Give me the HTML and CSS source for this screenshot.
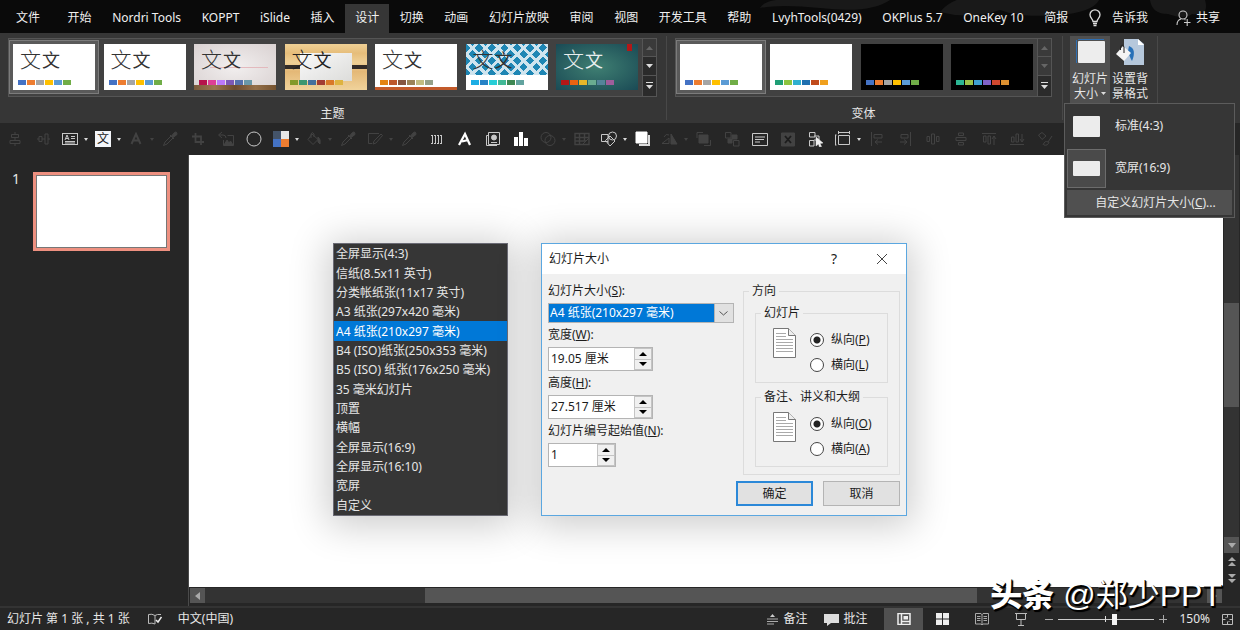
FILE: index.html
```html
<!DOCTYPE html>
<html lang="zh-CN">
<head>
<meta charset="utf-8">
<meta name="viewport" content="width=device-width, initial-scale=1">
<title>幻灯片大小</title>
<link rel="stylesheet" href="styles.css">
</head>
<body>
<div class="app">

  <header class="tabbar">
    <svg class="tabbar-art" viewBox="0 0 480 33" aria-hidden="true">
      <path d="M0 8Q6-2 30 0H130Q110 14 60 8Q20 4 0 8Z"/>
      <path d="M180 12Q190 0 205-2H340Q335 12 300 15Q260 18 240 10Q210 20 180 12Z"/>
      <path d="M390 0H445Q450 16 432 14Q425 20 408 14Q392 14 390 0Z"/>
    </svg>
    <nav class="tabs">
      <button class="tab tab-file">文件</button>
      <button class="tab">开始</button>
      <button class="tab">Nordri Tools</button>
      <button class="tab">KOPPT</button>
      <button class="tab">iSlide</button>
      <button class="tab">插入</button>
      <button class="tab is-active">设计</button>
      <button class="tab">切换</button>
      <button class="tab">动画</button>
      <button class="tab">幻灯片放映</button>
      <button class="tab">审阅</button>
      <button class="tab">视图</button>
      <button class="tab">开发工具</button>
      <button class="tab">帮助</button>
      <button class="tab">LvyhTools(0429)</button>
      <button class="tab">OKPlus 5.7</button>
      <button class="tab">OneKey 10</button>
      <button class="tab">简报</button>
      <button class="tab tab-icon">
        <svg width="12" height="18" viewBox="0 0 12 18"><path d="M4 12.500C4 10 1 9 1 5.800A5 5 0 0 1 11 5.800C11 9 8 10 8 12.500ZM4 14.500H8M4.500 16.500H7.500" fill="none" stroke="#ddd" stroke-width="1.300"/></svg>
        告诉我
      </button>
    </nav>
    <button class="tab tab-icon tab-share">
      <svg width="15" height="16" viewBox="0 0 15 16"><g fill="none" stroke="#ccc" stroke-width="1.100"><circle cx="7" cy="5" r="4"/><path d="M1 15Q1 10 5 9M8.500 9.500L9.500 10M8 12.500H14.500M11.200 9V16"/></g></svg>
      共享
    </button>
  </header>

  <section class="ribbon">
    <div class="group group-themes">
      <div class="gallery">
        <div class="thumbs">
          <button class="thumb is-selected office"><span class="sample"><b>文</b>文</span><span class="swatches"><i></i><i></i><i></i><i></i><i></i><i></i></span></button>
          <button class="thumb office"><span class="sample"><b>文</b>文</span><span class="swatches"><i></i><i></i><i></i><i></i><i></i><i></i></span></button>
          <button class="thumb gallery-pink"><span class="sample"><b>文</b>文</span><span class="swatches"><i></i><i></i><i></i><i></i><i></i><i></i></span></button>
          <button class="thumb wood"><span class="sample"><b>文</b>文</span><span class="swatches"><i></i><i></i><i></i><i></i><i></i><i></i></span></button>
          <button class="thumb retro"><span class="sample"><b>文</b>文</span><span class="swatches"><i></i><i></i><i></i><i></i><i></i><i></i></span></button>
          <button class="thumb integral"><span class="sample"><b>文</b>文</span><span class="swatches"><i></i><i></i><i></i><i></i><i></i><i></i></span></button>
          <button class="thumb ion"><span class="sample"><b>文</b>文</span><span class="swatches"><i></i><i></i><i></i><i></i><i></i><i></i></span></button>
        </div>
        <div class="scrollers">
          <button class="is-off" aria-label="上一行"><svg width="7" height="4"><path d="M0 4L3.500 0L7 4Z"/></svg></button>
          <button aria-label="下一行"><svg width="7" height="4"><path d="M0 0L3.500 4L7 0Z"/></svg></button>
          <button aria-label="其他"><svg width="7" height="7"><path d="M0 0H7V1H0ZM0 3L3.500 7L7 3Z"/></svg></button>
        </div>
      </div>
      <div class="group-name">主题</div>
    </div>

    <div class="group group-variants">
      <div class="gallery">
        <div class="thumbs">
          <button class="thumb is-selected office" aria-label="变体 1"><span class="swatches"><i></i><i></i><i></i><i></i><i></i><i></i></span></button>
          <button class="thumb fresh" aria-label="变体 2"><span class="swatches"><i></i><i></i><i></i><i></i><i></i><i></i></span></button>
          <button class="thumb office dark" aria-label="变体 3"><span class="swatches"><i></i><i></i><i></i><i></i><i></i><i></i></span></button>
          <button class="thumb vivid dark" aria-label="变体 4"><span class="swatches"><i></i><i></i><i></i><i></i><i></i><i></i></span></button>
        </div>
        <div class="scrollers">
          <button class="is-off" aria-label="上一行"><svg width="7" height="4"><path d="M0 4L3.500 0L7 4Z"/></svg></button>
          <button class="is-off" aria-label="下一行"><svg width="7" height="4"><path d="M0 0L3.500 4L7 0Z"/></svg></button>
          <button aria-label="其他"><svg width="7" height="7"><path d="M0 0H7V1H0ZM0 3L3.500 7L7 3Z"/></svg></button>
        </div>
      </div>
      <div class="group-name">变体</div>
    </div>

    <div class="group group-custom">
      <div class="size-holder">
        <button class="big-button is-open">
          <svg width="32" height="28" viewBox="0 0 32 28"><path d="M2.500 25V2M4 1.500H30" stroke="#2f6fb3" fill="none"/><rect x="4" y="3" width="27" height="22" rx="1" fill="#ededed"/></svg>
          <span>幻灯片</span>
          <span>大小 <svg width="5" height="3"><path d="M0 0L2.500 3L5 0Z" fill="#ddd"/></svg></span>
        </button>
        <div class="size-menu" role="menu">
          <button class="size-item" role="menuitem"><span class="size-pic"><i class="ratio-43"></i></span>标准(4:3)</button>
          <button class="size-item is-current" role="menuitem"><span class="size-pic"><i class="ratio-169"></i></span>宽屏(16:9)</button>
          <button class="size-custom" role="menuitem">自定义幻灯片大小(<u>C</u>)...</button>
        </div>
      </div>
      <button class="big-button">
        <svg width="32" height="28" viewBox="0 0 32 28"><path d="M10 1H24L30 6V27H10Z" fill="#b6c8dc"/><path d="M24 1V7H30Z" fill="#fff"/><path d="M15 8Q23 11 18 23Q16 20 14 13Z" fill="#2670b8"/><path d="M9 8L17 15L10 23L2 16Z" fill="#f4f4f4"/><path d="M6.500 12V9Q8 5 10 9V15" fill="none" stroke="#222"/></svg>
        <span>设置背</span>
        <span>景格式</span>
      </button>
    </div>
  </section>

  <div class="toolbar" role="toolbar">
    <button class="tool off" aria-label="垂直居中"><svg viewBox="0 0 16 16"><path d="M8 1V3.500M8 6.500V9.500M8 12.500V15M4.500 3.500H11.500V6.500H4.500ZM3 9.500H13V12.500H3Z"/></svg></button>
    <button class="tool off" aria-label="水平居中"><svg viewBox="0 0 16 16"><path d="M2 8H4M7 8H10M13 8H15M4 5.500H7V10.500H4ZM10 3H13V13H10Z"/></svg></button>
    <button class="tool split" aria-label="文本框"><svg viewBox="0 0 16 16"><rect x=".5" y="2.500" width="15" height="11"/><path d="M3 9L5 4L7 9M4 7.500H6M9 5.500H13M9 7.500H13M3 10.500H13M3 12H13"/></svg></button>
    <button class="tool split" aria-label="文字样式"><span class="text-tile">文</span></button>
    <button class="tool split off" aria-label="字体颜色"><svg viewBox="0 0 16 16"><path d="M3.500 13L8 3L12.500 13M5 9.500H11" stroke-width="2"/></svg></button>
    <button class="tool off" aria-label="取色器"><svg viewBox="0 0 16 16"><path d="M1.500 14.500L3 11L9 5L11 7L5 13ZM8 4L12 8"/><path class="solid" d="M9.500 5L12.500 1.500Q15 0 15 3.500L11 6.500Z"/></svg></button>
    <button class="tool off" aria-label="裁剪"><svg viewBox="0 0 16 16"><path d="M5.500 2V11H14M2 5.500H11V14" stroke-width="1.800"/></svg></button>
    <button class="tool off" aria-label="重设图片"><svg viewBox="0 0 16 16"><path d="M4 1L.5 4L4 7M1 4H5Q8 4 8 7M9.500 4.500H15.500V14.500H5.500V9"/><path class="solid" d="M6 14L9 9L11 12L12.500 10L15 14Z"/></svg></button>
    <button class="tool" aria-label="椭圆"><svg viewBox="0 0 16 16"><circle cx="8" cy="8" r="7"/></svg></button>
    <button class="tool split" aria-label="主题颜色"><svg viewBox="0 0 16 16"><g stroke="none"><path fill="#44546a" d="M0 0H8V8H0Z"/><path fill="#e7e6e6" d="M8 0H16V8H8Z"/><path fill="#4472c4" d="M0 8H8V16H0Z"/><path fill="#ed7d31" d="M8 8H16V16H8Z"/></g></svg></button>
    <button class="tool split off" aria-label="形状填充"><svg viewBox="0 0 16 16"><path d="M6 3L12 8.500L7 13.500L2 8.500ZM5 7V3Q6 0 8 3V6"/><path class="solid" d="M12 6Q15 8 14 13L12 11Z"/></svg></button>
    <button class="tool off" aria-label="填充取色"><svg viewBox="0 0 16 16"><path d="M1.500 14.500L3 11L9 5L11 7L5 13ZM8 4L12 8"/><path class="solid" d="M9.500 5L12.500 1.500Q15 0 15 3.500L11 6.500Z"/></svg></button>
    <button class="tool split off" aria-label="形状轮廓"><svg viewBox="0 0 16 16"><path d="M12 2.500H1.500V12.500H5M6 13L7 10L14 3L15.500 4.500L9 12Z"/></svg></button>
    <button class="tool off" aria-label="轮廓取色"><svg viewBox="0 0 16 16"><path d="M1.500 14.500L3 11L9 5L11 7L5 13ZM8 4L12 8"/><path class="solid" d="M9.500 5L12.500 1.500Q15 0 15 3.500L11 6.500Z"/></svg></button>
    <button class="tool" aria-label="均分"><svg viewBox="0 0 16 16"><path d="M3.500 4V13M6.500 4V13M9.500 4V13M12.500 4V13"/><path d="M2 4.500H14M2 12.500H14" stroke-dasharray="2 1"/></svg></button>
    <button class="tool" aria-label="艺术字"><svg viewBox="0 0 16 16"><path d="M2 14L8 3L13 14M5 10.500L11 9" stroke="#fff" stroke-width="2.200"/></svg></button>
    <button class="tool" aria-label="替换图表"><svg viewBox="0 0 16 16"><path d="M3 4.500H1.500V14.500H12M3.500 1.500H14.500V13.500H3.500ZM6 11.500H12"/><circle class="solid" cx="9" cy="6.500" r="2.500"/></svg></button>
    <button class="tool" aria-label="图表"><svg viewBox="0 0 16 16"><path fill="#fff" stroke="none" d="M1 6H5V15H1ZM6 1H10V15H6ZM11 7H15V15H11Z"/></svg></button>
    <button class="tool split off" aria-label="合并形状"><svg viewBox="0 0 16 16"><circle cx="6" cy="6.500" r="5"/><circle cx="10" cy="9.500" r="5"/></svg></button>
    <button class="tool off" aria-label="表格"><svg viewBox="0 0 16 16"><path d="M1 2.500H15V13.500H1ZM1 6.500H15M1 10H12M5.500 3V13M10.500 3V10" stroke-width="1.400"/><path d="M8 14L15 7"/></svg></button>
    <button class="tool split" aria-label="形状"><svg viewBox="0 0 16 16"><path d="M7 10.500H.5V3.500H7V12.500"/><circle cx="11.500" cy="5" r="4"/><path d="M9 15L14 10L9 5L4.500 9.500Z"/></svg></button>
    <button class="tool" aria-label="阴影"><svg viewBox="0 0 16 16"><path d="M1 1H12V12H1Z" fill="#fff" stroke="#fff"/><path d="M14 4V14H4" stroke="#ddd" stroke-width="2"/></svg></button>
    <button class="tool split off" aria-label="旋转"><svg viewBox="0 0 16 16"><path class="solid" d="M9 3V13H15Z"/><path d="M0 12.500H7V7ZM2 6Q4 2 7 4"/></svg></button>
    <button class="tool off" aria-label="上移一层"><svg viewBox="0 0 16 16"><path d="M1 7V1.500H7M14.500 9V14.500H8"/><path class="solid" d="M3 4H12V12H3Z"/></svg></button>
    <button class="tool off" aria-label="下移一层"><svg viewBox="0 0 16 16"><path d="M1.500 1.500H7V7H1.500ZM9.500 9.500H15V15H9.500Z"/><path class="solid" d="M8 4H13V8H8ZM4 8H8V12H4Z"/></svg></button>
    <button class="tool" aria-label="备注框"><svg viewBox="0 0 16 16"><path d="M.5 2.500H15.500V14.500H.5ZM3 6H13M3 8.500H12M3 11H8"/></svg></button>
    <button class="tool off" aria-label="删除"><svg viewBox="0 0 16 16"><path class="solid" d="M1.500 2H14.500V15H1.500Z"/><path d="M5 5L11 12M11 5L5 12" stroke="#1c1c1c" stroke-width="1.800"/></svg></button>
    <button class="tool" aria-label="选择"><svg viewBox="0 0 16 16"><path d="M1.500 1.500H7V6H1.500ZM1.500 9.500H6V15H1.500ZM6 5H11V9H6"/><path d="M8 6L15 12L12 12.500L13.500 15.500L11.500 16L10.500 13L8 15Z" fill="#eee" stroke="#eee" stroke-width=".5"/></svg></button>
    <button class="tool split" aria-label="布局"><svg viewBox="0 0 16 16"><path d="M3.500 4.500H14.500V13.500H3.500ZM.5 4V14M3 1.500H15"/><path d="M0 4H1.500M0 14H1.500M3.500 0V3M14.500 0V3"/></svg></button>
    <button class="tool off" aria-label="左对齐"><svg viewBox="0 0 16 16"><path d="M2.500 1V15M5 3.500H13V7H5ZM13 11H6M9 8.500L6 11L9 13.500"/></svg></button>
    <button class="tool off" aria-label="右对齐"><svg viewBox="0 0 16 16"><path d="M13.500 1V15M4 3.500H11V7H4ZM3 11H10M7 8.500L10 11L7 13.500"/></svg></button>
    <button class="tool off" aria-label="横向分布"><svg viewBox="0 0 16 16"><path d="M2 5.500H4.500V10.500H2ZM6.500 3H9.500V13H6.500ZM11.500 5.500H14V10.500H11.500Z"/></svg></button>
    <button class="tool off" aria-label="纵向分布"><svg viewBox="0 0 16 16"><path d="M5.500 2H10.500V4.500H5.500ZM3 6.500H13V9.500H3ZM5.500 11.500H10.500V14H5.500Z"/></svg></button>
    <button class="tool off" aria-label="顶端对齐"><svg viewBox="0 0 16 16"><path d="M1 2.500H15M2.500 5H5V11H2.500ZM7 5H9.500V13H7ZM13 14V5M11 8L13 5L15 8"/></svg></button>
    <button class="tool off" aria-label="底端对齐"><svg viewBox="0 0 16 16"><path d="M1 13.500H15M2.500 6H5V11H2.500ZM7 3H9.500V11H7ZM13 3V11M11 8L13 11L15 8"/></svg></button>
    <button class="tool off" aria-label="格式刷"><svg viewBox="0 0 16 16"><path d="M1.500 4L5 1.500L9 5L5 8.500ZM6 14Q8 9 11 11L15 5M7 14Q11 15 12 11"/></svg></button>
  </div>

  <main class="workspace">
    <aside class="slides">
      <span class="slide-no">1</span>
      <button class="slide-thumb" aria-label="幻灯片 1"></button>
    </aside>
    <div class="editor">
      <div class="canvas">
        <ul class="paper-list" role="listbox" aria-label="幻灯片大小">
          <li role="option">全屏显示(4:3)</li>
          <li role="option">信纸(8.5x11 英寸)</li>
          <li role="option">分类帐纸张(11x17 英寸)</li>
          <li role="option">A3 纸张(297x420 毫米)</li>
          <li role="option" aria-selected="true">A4 纸张(210x297 毫米)</li>
          <li role="option">B4 (ISO)纸张(250x353 毫米)</li>
          <li role="option">B5 (ISO) 纸张(176x250 毫米)</li>
          <li role="option">35 毫米幻灯片</li>
          <li role="option">顶置</li>
          <li role="option">横幅</li>
          <li role="option">全屏显示(16:9)</li>
          <li role="option">全屏显示(16:10)</li>
          <li role="option">宽屏</li>
          <li role="option">自定义</li>
        </ul>

        <form class="dialog" role="dialog" aria-labelledby="dialog-title">
          <div class="dialog-head">
            <h1 id="dialog-title">幻灯片大小</h1>
            <button type="button" class="head-button">?</button>
            <button type="button" class="head-button" aria-label="关闭"><svg width="12" height="12"><path d="M1 1L11 11M11 1L1 11" stroke="#444"/></svg></button>
          </div>
          <div class="dialog-body">
            <div class="fields">
              <label for="paper">幻灯片大小(<u>S</u>):</label>
              <span class="combo">
                <select id="paper"><option>A4 纸张(210x297 毫米)</option></select>
                <svg class="combo-arrow" width="9" height="5"><path d="M.5 .5L4.500 4L8.500 .5" fill="none" stroke="#555"/></svg>
              </span>
              <label for="width">宽度(<u>W</u>):</label>
              <span class="spin"><input id="width" type="text" value="19.05 厘米"><span class="spin-buttons"><button type="button" aria-label="增加宽度"><svg width="8" height="4"><path d="M0 4L4 0L8 4Z"/></svg></button><button type="button" aria-label="减小宽度"><svg width="8" height="4"><path d="M0 0L4 4L8 0Z"/></svg></button></span></span>
              <label for="height">高度(<u>H</u>):</label>
              <span class="spin"><input id="height" type="text" value="27.517 厘米"><span class="spin-buttons"><button type="button" aria-label="增加高度"><svg width="8" height="4"><path d="M0 4L4 0L8 4Z"/></svg></button><button type="button" aria-label="减小高度"><svg width="8" height="4"><path d="M0 0L4 4L8 0Z"/></svg></button></span></span>
              <label for="start">幻灯片编号起始值(<u>N</u>):</label>
              <span class="spin spin-short"><input id="start" type="text" value="1"><span class="spin-buttons"><button type="button" aria-label="增加编号"><svg width="8" height="4"><path d="M0 4L4 0L8 4Z"/></svg></button><button type="button" aria-label="减小编号"><svg width="8" height="4"><path d="M0 0L4 4L8 0Z"/></svg></button></span></span>
            </div>
            <fieldset class="orient">
              <legend>方向</legend>
              <fieldset class="orient-part">
                <legend>幻灯片</legend>
                <svg class="page-icon" width="23" height="30" viewBox="0 0 23 30"><path d="M.5 .5H15.500L22.500 7.500V29.500H.5Z" fill="#fff" stroke="#777"/><path d="M15.500 .5V7.500H22.500" fill="#eee" stroke="#777"/><path d="M3 5.500H13M3 8.500H13M3 11.500H20M3 14.500H20M3 17.500H20M3 20.500H20M3 23.500H20" stroke="#aaa"/></svg>
                <div class="radios">
                  <label><input type="radio" name="slide" checked><span>纵向(<u>P</u>)</span></label>
                  <label><input type="radio" name="slide"><span>横向(<u>L</u>)</span></label>
                </div>
              </fieldset>
              <fieldset class="orient-part">
                <legend>备注、讲义和大纲</legend>
                <svg class="page-icon" width="23" height="30" viewBox="0 0 23 30"><path d="M.5 .5H15.500L22.500 7.500V29.500H.5Z" fill="#fff" stroke="#777"/><path d="M15.500 .5V7.500H22.500" fill="#eee" stroke="#777"/><path d="M3 5.500H13M3 8.500H13M3 11.500H20M3 14.500H20M3 17.500H20M3 20.500H20M3 23.500H20" stroke="#aaa"/></svg>
                <div class="radios">
                  <label><input type="radio" name="notes" checked><span>纵向(<u>O</u>)</span></label>
                  <label><input type="radio" name="notes"><span>横向(<u>A</u>)</span></label>
                </div>
              </fieldset>
            </fieldset>
          </div>
          <div class="dialog-foot">
            <button type="button" class="push is-default">确定</button>
            <button type="button" class="push">取消</button>
          </div>
        </form>
      </div>
      <div class="hscroll">
        <button aria-label="向左"><svg width="5" height="8"><path d="M5 0L0 4L5 8Z"/></svg></button>
        <div class="htrack"><div class="hthumb"></div></div>
        <button aria-label="向右"><svg width="5" height="8"><path d="M0 0L5 4L0 8Z"/></svg></button>
      </div>
    </div>
    <div class="vscroll">
      <div class="vtrack"><div class="vthumb"></div></div>
      <button class="vdown" aria-label="向下"><svg width="8" height="5"><path d="M0 0L4 5L8 0Z"/></svg></button>
      <button aria-label="上一张幻灯片"><svg width="8" height="9"><path d="M0 4L4 0L8 4ZM0 9L4 5L8 9Z"/></svg></button>
      <button aria-label="下一张幻灯片"><svg width="8" height="9"><path d="M0 0L4 4L8 0ZM0 5L4 9L8 5Z"/></svg></button>
    </div>
    <div class="signature"><b>头条</b> @郑少PPT</div>
  </main>

  <footer class="status">
    <span class="status-page">幻灯片 第 1 张 , 共 1 张</span>
    <button class="status-button status-spell" aria-label="拼写检查"><svg width="14" height="12" viewBox="0 0 14 12"><path d="M7 2.500Q4 .5 .5 1.500V10.500Q4 9.500 7 11V2.500Q9 1 13 1.500" fill="none" stroke="#bbb"/><path d="M8 7L10 9L13.500 4" fill="none" stroke="#eee" stroke-width="1.500"/></svg></button>
    <button class="status-button">中文(中国)</button>
    <div class="status-right">
      <button class="status-button"><svg width="13" height="12" viewBox="0 0 13 12"><path d="M4 4L6.500 1L9 4Z" fill="#ccc"/><path d="M1 6H12M1 8.500H12M1 11H8" stroke="#aaa"/></svg>备注</button>
      <button class="status-button"><svg width="15" height="13" viewBox="0 0 15 13"><path d="M0 1H15V10H7L3 13V10H0Z" fill="#ddd"/></svg>批注</button>
      <div class="views">
        <button class="view is-active" aria-label="普通"><svg width="14" height="12" viewBox="0 0 14 12"><path d="M1 .5H13V11.500H1ZM4.500 .5V11.500M4.500 8.500H13" fill="none" stroke="#eee" stroke-width="1.500"/><path d="M6.500 3H11V6.500H6.500Z" fill="#eee"/></svg></button>
        <button class="view" aria-label="浏览"><svg width="13" height="12" viewBox="0 0 13 12"><path d="M0 0H6V5.500H0ZM7 0H13V5.500H7ZM0 6.500H6V12H0ZM7 6.500H13V12H7Z" fill="#eee"/></svg></button>
        <button class="view" aria-label="阅读"><svg width="14" height="12" viewBox="0 0 14 12"><path d="M.5 .5H6L7 1.500L8 .5H13.500V11H8L7 12L6 11H.5ZM7 1V11M2 3.500H5.500M2 5.500H5.500M2 7.500H5.500M8.500 3.500H12M8.500 5.500H12M8.500 7.500H12" fill="none" stroke="#aaa"/></svg></button>
        <button class="view" aria-label="放映"><svg width="12" height="13" viewBox="0 0 12 13"><path d="M0 .5H12M1.500 1V6.500H10.500V1M6 7V12M3 12.500H9" fill="none" stroke="#bbb"/></svg></button>
      </div>
      <button class="zoom-step" aria-label="缩小"><svg width="8" height="8"><path d="M0 4.500H8" stroke="#aaa"/></svg></button>
      <input class="zoom" type="range" min="0" max="100" value="59" aria-label="缩放">
      <button class="zoom-step" aria-label="放大"><svg width="8" height="8"><path d="M0 4.500H8M4.500 0V8" stroke="#aaa"/></svg></button>
      <button class="status-button zoom-value">150%</button>
      <button class="status-button" aria-label="适应窗口"><svg width="11" height="11" viewBox="0 0 11 11"><path d="M.5 .5H10.500V10.500H.5ZM5.500 1V3.500M5.500 7.500V10M1 5.500H3.500M7.500 5.500H10M3.500 3.500H4.500M6.500 7.500H7.500" fill="none" stroke="#bbb"/></svg></button>
    </div>
  </footer>
</div>
</body>
</html>
```

FILE: styles.css
```css
* {
  box-sizing: border-box;
}

body {
  margin: 0;
  background: #262626;
  color: #e6e6e6;
  font-family: "Noto Sans", "Noto Sans CJK SC", sans-serif;
  font-size: 12px;
  line-height: 16px;
}

button,
input,
select {
  margin: 0;
  padding: 0;
  border: 0;
  background: none;
  color: inherit;
  font: inherit;
}

svg {
  display: block;
  flex: none;
}

.app {
  display: flex;
  flex-direction: column;
  min-height: 100vh;
}

/* Tab bar */

.tabbar {
  position: relative;
  display: flex;
  gap: 8px;
  height: 33px;
  padding: 4px 10px 0 6px;
  background: #0a0a0a;
}

.tabbar-art {
  position: absolute;
  top: 0;
  right: 0;
  height: 33px;
  fill: #191919;
}

.tabs {
  position: relative;
  display: flex;
  flex: 1;
  justify-content: space-between;
}

.tab {
  padding: 0 10px 1px;
  color: #f0f0f0;
  white-space: nowrap;
}

.tab-file {
  margin-right: 7px;
}

.tab.is-active {
  background: #363636;
}

.tab-icon {
  display: flex;
  align-items: center;
  gap: 11px;
}

.tab-share {
  position: relative;
  gap: 5px;
}

/* Ribbon */

.ribbon {
  display: flex;
  height: 90px;
  background: #363636;
}

.group {
  margin: 3px 0;
  border-right: 1px solid #484848;
}

.group-themes {
  padding: 2px 9px 0 8px;
}

.group-variants {
  padding: 2px 10px 0 8px;
}

.gallery {
  display: flex;
  height: 59px;
  border: 1px solid #555;
  background: #414141;
}

.thumbs {
  display: flex;
  justify-content: space-between;
}

.group-themes .thumbs {
  width: 633px;
}

.group-variants .thumbs {
  width: 361px;
}

.thumb {
  display: flex;
  flex-direction: column;
  justify-content: flex-end;
  width: 90px;
  height: 54px;
  margin-top: 1px;
  padding: 0 0 5px 5px;
  border: 4px solid transparent;
  background-clip: padding-box;
  background-color: #fff;
  background-origin: padding-box;
  color: #333;
}

.thumb.is-selected {
  border-color: #5a5a5a;
  outline: 1px solid #7c7c7c;
  outline-offset: -1px;
}

.sample {
  flex: 1;
  padding: 0 0 0 2px;
  font-size: 18px;
  line-height: 30px;
  text-align: left;
}

.sample b {
  margin-right: 1px;
  font-size: 21px;
  font-weight: 300;
}

.swatches {
  display: flex;
  gap: 1px;
}

.swatches i {
  width: 8px;
  height: 5px;
}

.swatches i:nth-child(1) { background: var(--c1); }
.swatches i:nth-child(2) { background: var(--c2); }
.swatches i:nth-child(3) { background: var(--c3); }
.swatches i:nth-child(4) { background: var(--c4); }
.swatches i:nth-child(5) { background: var(--c5); }
.swatches i:nth-child(6) { background: var(--c6); }

.office {
  --c1: #4472c4;
  --c2: #ed7d31;
  --c3: #a5a5a5;
  --c4: #ffc000;
  --c5: #5b9bd5;
  --c6: #70ad47;
}

.fresh {
  --c1: #1f9e75;
  --c2: #8cc43f;
  --c3: #2fb0cf;
  --c4: #1f70b0;
  --c5: #c04a1c;
  --c6: #f0a01e;
}

.vivid {
  --c1: #2bb593;
  --c2: #9bc24a;
  --c3: #3f9fd0;
  --c4: #8062c8;
  --c5: #d0472f;
  --c6: #dc9030;
}

.gallery-pink {
  --c1: #b5134b;
  --c2: #de3e96;
  --c3: #bc78fa;
  --c4: #7d58b5;
  --c5: #5570ab;
  --c6: #6a98a8;
  background-color: transparent;
  background-image:
    linear-gradient(#e3b9bd, #e3b9bd),
    linear-gradient(90deg, #7b5a3c, #9b7550, #6d4c2f, #94704a, #75522f),
    radial-gradient(#f2efef, #d9d1d1);
  background-position: 16px 23px, 0 100%, 0 0;
  background-size: 58px 1px, 100% 5px, 100% 100%;
  background-repeat: no-repeat;
}

.wood {
  --c1: #83992a;
  --c2: #3c9770;
  --c3: #44709d;
  --c4: #a23c33;
  --c5: #d97828;
  --c6: #deb340;
  background-color: transparent;
  background-image:
    linear-gradient(150deg, #fafafa, #dcdcda),
    linear-gradient(#332c28, #332c28),
    linear-gradient(#efd095, #e6bd7a 20%, #efd096 40%, #e4b877 60%, #f0d39b);
  background-position: 15px 9px, 0 21px, 0 0;
  background-size: 52px 28px, 100% 4px, 100% 100%;
  background-repeat: no-repeat;
  color: #222;
}

.retro {
  --c1: #e48312;
  --c2: #bd582c;
  --c3: #865640;
  --c4: #9b8357;
  --c5: #c2bc80;
  --c6: #94a088;
  background-image: linear-gradient(#c25a2a, #c25a2a);
  background-position: 0 100%;
  background-size: 100% 3px;
  background-repeat: no-repeat;
}

.integral {
  --c1: #1cade4;
  --c2: #2683c6;
  --c3: #27ced7;
  --c4: #42ba97;
  --c5: #3e8853;
  --c6: #62a39f;
  background-image:
    linear-gradient(#fff, #fff),
    repeating-linear-gradient(45deg, transparent 0 6px, #cfe4ee 6px 9px),
    repeating-linear-gradient(135deg, #1e86b4 0 6px, #cfe4ee 6px 9px);
  background-position: 0 31px, 0 0, 0 0;
  background-size: 100% 15px, 100% 100%, 100% 100%;
  background-repeat: no-repeat;
}

.ion {
  --c1: #b31717;
  --c2: #ea6312;
  --c3: #e6b729;
  --c4: #6aac90;
  --c5: #54849a;
  --c6: #9e5e9b;
  background-color: transparent;
  background-image:
    linear-gradient(#b31717, #b31717),
    radial-gradient(#3f7f72, #1a4a55);
  background-position: 71px 0, 0 0;
  background-size: 5px 7px, 100% 100%;
  background-repeat: no-repeat;
  color: #e8eeee;
}

.dark {
  background-color: #000;
}

.scrollers {
  display: grid;
  width: 14px;
  border-left: 1px solid #555;
}

.scrollers button {
  display: grid;
  place-items: center;
  border-bottom: 1px solid #555;
  background: #2b2b2b;
  fill: #ddd;
}

.scrollers button:last-child {
  border-bottom: 0;
}

.scrollers .is-off {
  background: #3a3a3a;
  fill: #666;
}

.group-name {
  padding-top: 9px;
  text-align: center;
}

.group-custom {
  display: flex;
  padding: 0 7px;
}

.size-holder {
  position: relative;
}

.big-button {
  display: flex;
  flex-direction: column;
  align-items: center;
  width: 40px;
  height: 67px;
  padding-top: 2px;
  line-height: 15px;
  white-space: nowrap;
}

.big-button svg {
  margin-bottom: 5px;
}

.big-button span svg {
  display: inline-block;
  margin: 0 0 3px;
}

.big-button.is-open {
  background: #505050;
}

.size-menu {
  position: absolute;
  z-index: 5;
  top: 67px;
  left: -6px;
  width: 171px;
  padding: 2px;
  border: 1px solid #5c5c5c;
  background: #363636;
}

.size-item {
  display: flex;
  align-items: center;
  gap: 9px;
  width: 100%;
  height: 40px;
  margin-bottom: 2px;
}

.size-pic {
  display: grid;
  place-items: center;
  width: 39px;
  height: 39px;
}

.is-current .size-pic {
  border: 1px solid #6c6c6c;
  background: #4a4a4a;
}

.size-pic i {
  width: 27px;
  border-radius: 1px;
  background: #ececec;
}

.ratio-43 {
  height: 21px;
}

.ratio-169 {
  height: 15px;
}

.size-custom {
  width: 100%;
  height: 25px;
  padding-left: 12px;
  background: #505050;
}

/* Quick toolbar */

.toolbar {
  display: flex;
  align-items: center;
  height: 32px;
  padding: 0 0 0 1px;
  background: #262626;
}

.tool {
  display: flex;
  flex: none;
  align-items: center;
  justify-content: center;
  width: 28px;
  height: 24px;
}

.tool svg {
  width: 16px;
  height: 16px;
  fill: none;
  stroke: #c8c8c8;
}

.tool .solid {
  fill: #c8c8c8;
}

.tool.off svg {
  stroke: #424242;
}

.tool.off .solid {
  fill: #424242;
}

.tool.split {
  justify-content: flex-start;
  gap: 6px;
  width: 33px;
  padding-left: 5px;
}

.tool.split::after {
  content: "";
  border: 2px solid transparent;
  border-top: 3px solid #d8d8d8;
  border-bottom: 0;
}

.tool.split.off::after {
  border-top-color: #424242;
}

.text-tile {
  width: 16px;
  height: 16px;
  background: #f4f6fa;
  color: #222;
}

/* Workspace */

.workspace {
  position: relative;
  display: flex;
  flex: 1;
  min-height: 451px;
}

.slides {
  display: flex;
  align-items: flex-start;
  gap: 13px;
  width: 189px;
  padding: 17px 18px 0 12px;
  border-right: 1px solid #4a4a4a;
}

.slide-no {
  padding-top: 1px;
  font-size: 14px;
  line-height: 12px;
}

.slide-thumb {
  flex: 1;
  aspect-ratio: 137 / 79;
  border: 3px solid #ee9080;
  outline: 1px solid #777;
  outline-offset: -4px;
  background: #fff;
}

.editor {
  display: flex;
  flex: 1;
  flex-direction: column;
}

.canvas {
  position: relative;
  flex: 1;
  background: #fff;
}

.hscroll {
  display: flex;
  margin: 1px 1px 3px;
  background: #333;
}

.hscroll button {
  display: grid;
  place-items: center;
  width: 15px;
  height: 15px;
  background: #555;
  fill: #aaa;
}

.htrack {
  flex: 1;
}

.hthumb {
  width: 55%;
  height: 15px;
  margin-left: 22%;
  background: #555;
}

.vscroll {
  display: flex;
  flex-direction: column;
  width: 17px;
  padding: 0 1px 19px;
}

.vtrack {
  display: flex;
  flex: 1;
  align-items: flex-start;
  padding-top: 148px;
  background: #333;
}

.vthumb {
  flex: 1;
  height: 104px;
  background: #555;
}

.vscroll button {
  display: grid;
  place-items: center;
  height: 17px;
  fill: #aaa;
}

.vscroll .vdown {
  height: 16px;
  background: #555;
}

.signature {
  position: absolute;
  z-index: 4;
  right: 18px;
  bottom: -5px;
  color: #fff;
  font-family: "Liberation Sans", "Noto Sans CJK SC", sans-serif;
  font-size: 32px;
  line-height: 32px;
  text-shadow: 1px 1px 0 #000, 2px 2px 1px #000, 1px 2px 0 #000;
  white-space: nowrap;
}

.signature b {
  font-weight: 900;
}

/* Paper sizes */

.paper-list {
  position: absolute;
  top: 88px;
  left: 144px;
  display: grid;
  grid-auto-rows: 1fr;
  width: 175px;
  height: 273px;
  margin: 0;
  padding: 0;
  border: 1px solid #6a6a74;
  background: #363636;
  box-shadow: 0 4px 36px 6px rgba(0, 0, 0, 0.2);
  list-style: none;
  white-space: nowrap;
}

.paper-list li {
  display: flex;
  align-items: center;
  padding: 1px 0 0 2px;
}

.paper-list [aria-selected="true"] {
  background: #0078d7;
  color: #fff;
}

/* Dialog */

.dialog {
  position: absolute;
  top: 88px;
  left: 352px;
  width: 366px;
  border: 1px solid #5ba7e0;
  background: #f0f0f0;
  box-shadow: 0 4px 36px 6px rgba(0, 0, 0, 0.2);
  color: #1c1c1c;
}

.dialog-head {
  display: flex;
  align-items: center;
  height: 30px;
  padding-left: 7px;
  background: #fff;
}

.dialog-head h1 {
  flex: 1;
  margin: 0;
  font-size: 12px;
  font-weight: 400;
}

.head-button {
  display: grid;
  place-items: center;
  width: 48px;
  height: 30px;
  font-size: 14px;
}

.dialog-body {
  display: flex;
  justify-content: space-between;
  padding: 9px 6px 0;
}

.fields {
  display: flex;
  flex-direction: column;
  align-items: flex-start;
  width: 186px;
}

.fields label {
  height: 20px;
}

.combo {
  position: relative;
  display: flex;
  width: 100%;
  margin-bottom: 4px;
}

.combo select {
  flex: 1;
  height: 20px;
  padding: 0 19px 0 1px;
  border: 1px solid #b4b4b4;
  background: linear-gradient(90deg, #0078d7 0 165px, #b4b4b4 165px 166px, #e1e1e1 166px);
  color: #fff;
  appearance: none;
}

.combo-arrow {
  position: absolute;
  top: 8px;
  right: 6px;
  pointer-events: none;
}

.spin {
  display: flex;
  width: 105px;
  height: 24px;
  margin-bottom: 4px;
  border: 1px solid #b4b4b4;
  background: #fff;
}

.spin-short {
  width: 68px;
}

.spin input {
  flex: 1;
  min-width: 0;
  padding-left: 2px;
}

.spin-buttons {
  display: grid;
  width: 18px;
  background: #c4c4c4;
  gap: 1px;
  padding: 1px;
}

.spin-buttons button {
  display: grid;
  place-items: center;
  background: #f0f0f0;
}

fieldset {
  min-width: 0;
  margin: 0;
  border: 1px solid #dcdcdc;
}

legend {
  padding: 0 3px;
}

.orient {
  width: 157px;
  padding: 6px 11px 7px;
}

.orient > legend {
  margin-left: -6px;
}

.orient-part {
  display: flex;
  align-items: flex-start;
  gap: 14px;
  height: 78px;
  padding: 7px 0 0 17px;
}

.orient-part > legend {
  margin-left: -12px;
}

.orient-part + .orient-part {
  margin-top: 6px;
}

.radios {
  display: grid;
  gap: 9px;
  padding-top: 4px;
}

.radios label {
  display: flex;
  align-items: center;
  gap: 7px;
  white-space: nowrap;
}

.radios input {
  width: 14px;
  height: 14px;
  border: 1px solid #444;
  border-radius: 50%;
  background: #fff;
  appearance: none;
}

.radios input:checked {
  background: radial-gradient(#222 0 3px, #fff 4px);
}

.dialog-foot {
  display: flex;
  justify-content: flex-end;
  gap: 10px;
  padding: 6px 6px 9px;
}

.push {
  width: 77px;
  height: 25px;
  border: 1px solid #b4b4b4;
  background: #e1e1e1;
}

.push.is-default {
  border: 2px solid #2b88d8;
}

/* Status bar */

.status {
  display: flex;
  align-items: center;
  height: 24px;
  padding: 0 7px;
  border-top: 2px solid #333;
  background: #262626;
  white-space: nowrap;
}

.status-button {
  display: flex;
  align-items: center;
  gap: 4px;
}

.status-spell {
  margin: 0 16px 0 18px;
}

.status-right {
  display: flex;
  align-items: center;
  margin-left: auto;
}

.status-right > .status-button + .status-button {
  margin-left: 17px;
}

.views {
  display: flex;
  margin-left: 17px;
}

.view {
  display: grid;
  place-items: center;
  width: 39px;
  height: 22px;
}

.view.is-active {
  background: #505050;
}

.zoom-step {
  display: grid;
  place-items: center;
  width: 18px;
}

.zoom {
  width: 96px;
  height: 12px;
  background:
    linear-gradient(#ddd, #ddd) 47px 50% / 1px 6px no-repeat,
    linear-gradient(#ccc, #ccc) 0 50% / 100% 1px no-repeat;
  appearance: none;
}

.zoom::-webkit-slider-thumb {
  width: 5px;
  height: 11px;
  background: #f4f4f4;
  appearance: none;
}

.status-right > .zoom-value {
  margin-left: 7px;
}

.status-right > .zoom-value + .status-button {
  margin-left: 12px;
}
```
